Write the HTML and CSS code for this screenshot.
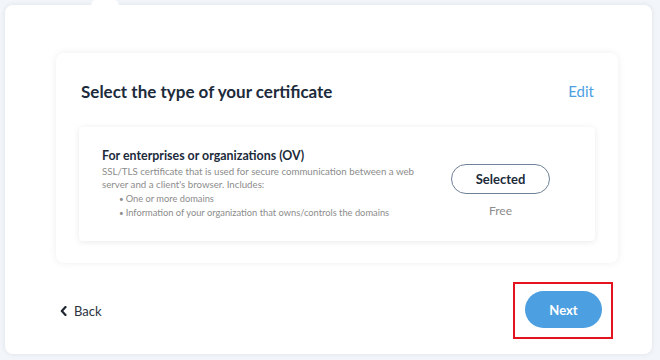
FILE: index.html
```html
<!DOCTYPE html>
<html lang="en">
<head>
    <meta charset="UTF-8">
    <meta name="viewport" content="width=device-width, initial-scale=1.0">
    <title>Certificate type</title>
    <link rel="stylesheet" href="styles.css">
</head>
<body>
    <div class="page-card">
        <div class="type-card">
            <div class="type-header">
                <h2 class="type-title">Select the type of your certificate</h2>
                <a href="#" class="edit-link">Edit</a>
            </div>

            <div class="option-card">
                <div class="option-info">
                    <h3 class="option-title">For enterprises or organizations (OV)</h3>
                    <p class="option-desc">SSL/TLS certificate that is used for secure communication between a web server and a client's browser. Includes:</p>
                    <ul class="option-list">
                        <li>One or more domains</li>
                        <li>Information of your organization that owns/controls the domains</li>
                    </ul>
                </div>
                <div class="option-action">
                    <button type="button" class="selected-button">Selected</button>
                    <span class="option-price">Free</span>
                </div>
            </div>
        </div>

        <div class="wizard-footer">
            <a href="#" class="back-link">
                <svg width="7" height="10" viewBox="0 0 7 10" aria-hidden="true">
                    <path d="M5.5 1 L1.8 5 L5.5 9" fill="none" stroke="#1f2630" stroke-width="2.2" stroke-linecap="round" stroke-linejoin="round"/>
                </svg>
                Back
            </a>
            <div class="next-highlight">
                <button type="button" class="next-button">Next</button>
            </div>
        </div>
    </div>
</body>
</html>
```

FILE: styles.css
```css
* {
    margin: 0;
    padding: 0;
    box-sizing: border-box;
}

body {
    font-family: Lato, "Open Sans", sans-serif;
    background-color: #f2f5f9;
    padding: 5px 8px 6px 5px;
    height: 360px;
    overflow: hidden;
}

.page-card {
    position: relative;
    height: 349px;
    background-color: white;
    border-radius: 8px;
    box-shadow: 0 0 4px rgba(160, 175, 195, 0.25);
    padding: 48px 34px 0 51px;
}

/* little tab sticking out above the card */
.page-card::before {
    content: "";
    position: absolute;
    top: -6px;
    left: 86px;
    width: 28px;
    height: 8px;
    background-color: white;
    border-radius: 7px 7px 0 0;
}

.type-card {
    background-color: white;
    border-radius: 8px;
    box-shadow: 0 0 8px rgba(0, 0, 0, 0.07);
    padding: 26px 23px 22px;
}

.type-header {
    display: flex;
    justify-content: space-between;
    align-items: center;
    height: 24px;
    padding: 0 1px 0 2px;
    margin-bottom: 24px;
}

.type-title {
    font-size: 17px;
    font-weight: 700;
    color: #1c2b3b;
}

.edit-link {
    font-size: 15px;
    color: #4d9fe3;
    text-decoration: none;
}

.option-card {
    display: flex;
    justify-content: space-between;
    align-items: flex-start;
    height: 114px;
    border-radius: 4px;
    box-shadow: 0 1px 6px rgba(0, 0, 0, 0.09);
    padding: 20px 45px 0 23px;
}

.option-info {
    width: 330px;
}

.option-title {
    font-size: 12.4px;
    font-weight: 700;
    line-height: 18px;
    color: #1c2b3b;
}

.option-desc {
    font-size: 9.7px;
    line-height: 13px;
    color: #8c8c8c;
}

.option-list {
    list-style: none;
    padding-left: 17px;
    font-size: 9.3px;
    line-height: 13px;
    color: #8c8c8c;
    margin-top: 1px;
}

.option-list li::before {
    content: "\2022";
    font-size: 8px;
    margin-right: 2px;
}

.option-action {
    display: flex;
    flex-direction: column;
    align-items: center;
    gap: 9px;
    margin-top: 17px;
}

.selected-button {
    width: 99px;
    height: 30px;
    border: 1px solid #6f8197;
    border-radius: 15px;
    background-color: white;
    font-family: Lato, "Open Sans", sans-serif;
    font-size: 13px;
    font-weight: 700;
    color: #1c2b3b;
}

.option-price {
    font-size: 12px;
    color: #8c8c8c;
}

.wizard-footer {
    display: flex;
    justify-content: space-between;
    align-items: center;
    margin-top: 19px;
    margin-right: 5px;
    padding-left: 4px;
}

.back-link {
    display: flex;
    align-items: center;
    gap: 7px;
    font-size: 13px;
    color: #2b3340;
    text-decoration: none;
}

.next-highlight {
    border: 2px solid #e3141f;
    padding: 7px 9px 9px 10px;
}

.next-button {
    width: 77px;
    height: 37px;
    border: none;
    border-radius: 19px;
    background-color: #4c9fe0;
    font-family: Lato, "Open Sans", sans-serif;
    font-size: 13px;
    font-weight: 700;
    color: white;
}
```
